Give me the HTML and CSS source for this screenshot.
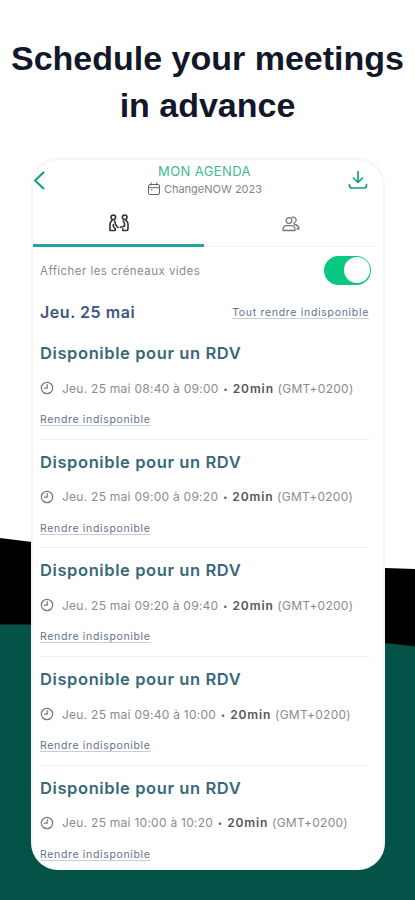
FILE: index.html
```
<!DOCTYPE html>
<html lang="fr">
<head>
<meta charset="utf-8">
<title>Mon agenda</title>
<link rel="stylesheet" href="styles.css">
</head>
<body>
<svg class="backdrop" viewBox="0 0 415 900" aria-hidden="true">
  <path d="M0 538L32 542L385 568L415 569V660H0Z" fill="#000"/>
  <path d="M0 624.500H32C180 624 280 629 385 643L415 646.500V900H0Z" fill="#045248"/>
</svg>
<svg class="defs" aria-hidden="true">
  <symbol id="clock" viewBox="0 0 14 14"><circle cx="7" cy="7" r="5.700"/><path d="M7.200 3.600V7.200H4.300"/></symbol>
</svg>
<main class="page">
  <h1 class="headline">Schedule your meetings<br>in advance</h1>
  <section class="card">
    <header class="bar">
      <svg class="back" viewBox="0 0 14 20"><path d="M10.500 2.500L2 10.500L10.500 18.500"/></svg>
      <div class="heading">
        <div class="name"><span>MON AGENDA</span></div>
        <div class="event">
          <svg class="calendar" viewBox="0 0 14 14"><rect x="1.500" y="2.500" width="11" height="10" rx="1.500"/><path d="M1.500 5.700H12.500M4.200 .8V3M9.800 .8V3M4.200 8H5"/></svg>
          <span>ChangeNOW 2023</span>
        </div>
      </div>
      <svg class="download" viewBox="0 0 20 20"><path d="M10 1.500V12M5.500 8L10 12.500L14.500 8M1.500 14.500V15.500Q1.500 18 4 18H16Q18.500 18 18.500 15.500V14.500"/></svg>
    </header>
    <nav class="tabs">
      <div class="tab active">
        <svg class="meet" viewBox="0 0 20 18"><circle cx="4.300" cy="3.300" r="2.300"/><circle cx="15.700" cy="3.300" r="2.300"/><path d="M3 6.500Q1 8 1 10V16.500H6.300V14.500L4.300 12.500V10.500M5.800 7L6.500 10.500L9 13.500M17 6.500Q19 8 19 10V15Q19 16.500 17.500 16.500H13.800V14.800M14.200 7L15.500 9.500V12L13.500 12.800L11.300 13.300"/></svg>
      </div>
      <div class="tab">
        <svg class="people" viewBox="0 0 18 16"><circle cx="7" cy="4.500" r="2.900"/><path d="M1 14.500V13Q1.300 9.700 4.500 9.700H9.500Q12.700 9.700 13 13V14.500ZM10 1.200C14.500 .2 15.500 5.500 12 7.200L12.500 8.500Q16.800 9 17 13H15"/></svg>
      </div>
    </nav>
    <div class="toggle-row">
      <span class="toggle-label">Afficher les créneaux vides</span>
      <span class="switch"><i></i></span>
    </div>
    <div class="day">
      <h2>Jeu. 25 mai</h2>
      <a>Tout rendre indisponible</a>
    </div>
    <div class="slots">
      <article class="slot">
        <h3>Disponible pour un RDV</h3>
        <div class="time"><svg><use href="#clock"/></svg><span>Jeu. 25 mai 08:40 à 09:00 <em>•</em> <b>20min</b> (GMT+0200)</span></div>
        <a>Rendre indisponible</a>
      </article>
      <article class="slot">
        <h3>Disponible pour un RDV</h3>
        <div class="time"><svg><use href="#clock"/></svg><span>Jeu. 25 mai 09:00 à 09:20 <em>•</em> <b>20min</b> (GMT+0200)</span></div>
        <a>Rendre indisponible</a>
      </article>
      <article class="slot">
        <h3>Disponible pour un RDV</h3>
        <div class="time"><svg><use href="#clock"/></svg><span>Jeu. 25 mai 09:20 à 09:40 <em>•</em> <b>20min</b> (GMT+0200)</span></div>
        <a>Rendre indisponible</a>
      </article>
      <article class="slot">
        <h3>Disponible pour un RDV</h3>
        <div class="time"><svg><use href="#clock"/></svg><span>Jeu. 25 mai 09:40 à 10:00 <em>•</em> <b>20min</b> (GMT+0200)</span></div>
        <a>Rendre indisponible</a>
      </article>
      <article class="slot">
        <h3>Disponible pour un RDV</h3>
        <div class="time"><svg><use href="#clock"/></svg><span>Jeu. 25 mai 10:00 à 10:20 <em>•</em> <b>20min</b> (GMT+0200)</span></div>
        <a>Rendre indisponible</a>
      </article>
    </div>
  </section>
</main>
</body>
</html>
```
FILE: styles.css
```
* { box-sizing: border-box; }
body { margin: 0; background: #fff; font-family: Inter, "Open Sans", sans-serif; }
h1, h2, h3 { margin: 0; }
svg { display: block; fill: none; stroke-linecap: round; stroke-linejoin: round; }
.defs { display: none; }
.backdrop { position: absolute; inset: 0; width: 415px; height: 900px; }
.page { position: relative; width: 415px; height: 900px; overflow: hidden; padding-top: 35px; }
.headline {
  height: 123px;
  font: bold 34px/47px "Liberation Sans", Arial, sans-serif;
  text-align: center;
  white-space: nowrap;
  color: #12172a;
}
.card {
  width: 354px;
  height: 712px;
  margin-left: 31px;
  background: #fff;
  border: 2px solid #f6f6f6;
  border-bottom-color: #fff;
  border-radius: 27px;
  overflow: hidden;
}
.bar { display: flex; height: 41px; justify-content: space-between; padding: 0 15px 0 0; }
.back { width: 14px; height: 20px; margin-top: 10px; stroke: #129a82; stroke-width: 2; }
.heading { padding: 3px 0 0 14px; }
.name { font-size: 13px; line-height: 16px; text-align: center; color: #3fba91; letter-spacing: .4px; }
.event { display: flex; align-items: center; gap: 3px; height: 19px; font-size: 11px; color: #858585; letter-spacing: 0; }
.calendar { width: 14px; height: 14px; stroke: #666; stroke-width: 1; }
.download { width: 20px; height: 20px; margin-top: 10px; stroke: #12a287; stroke-width: 1.7; }
.tabs { display: flex; gap: 2px; width: 343px; height: 46px; }
.tab { flex: 1; height: 46px; display: flex; justify-content: center; padding-top: 13px; border-bottom: 1px solid #f0f0f2; }
.tab.active { flex: none; width: 171px; border-bottom: 3px solid #22a699; }
.meet { width: 20px; height: 18px; stroke: #333; stroke-width: 1.6; }
.people { width: 18px; height: 16px; margin-top: 2px; stroke: #777; stroke-width: 1.3; }
.toggle-row { display: flex; justify-content: space-between; align-items: center; height: 48px; padding: 0 12px 0 7px; }
.toggle-label { font-size: 11.500px; color: #8b8b8f; letter-spacing: .45px; }
.switch { width: 47px; height: 29px; margin-top: -2px; border-radius: 15px; background: #09c982; display: flex; justify-content: flex-end; align-items: center; padding-right: 1px; }
.switch i { width: 26px; height: 26px; border-radius: 50%; background: #fff; }
.day { display: flex; justify-content: space-between; align-items: center; height: 34px; margin-bottom: 2px; padding: 1px 14px 1px 7px; }
.day h2 { font-size: 16px; font-weight: 600; color: #3e5681; letter-spacing: .55px; }
a { color: #65718d; text-decoration: underline; text-decoration-color: #c7ced8; text-underline-offset: 2px; }
.day a { font-size: 10.500px; letter-spacing: .7px; }
.slots { padding: 0 14px 0 7px; }
.slot { height: 108.700px; padding-top: 11px; border-bottom: 1px solid #eeeff1; }
.slot:last-child { border: 0; }
.slot h3 { font-size: 16.500px; line-height: 22px; font-weight: 600; color: #38697a; letter-spacing: .6px; white-space: nowrap; }
.time { display: flex; align-items: center; height: 20px; margin-top: 14px; font-size: 12px; color: #8b8b8f; white-space: nowrap; letter-spacing: .26px; }
.time svg { width: 14px; height: 14px; margin-right: 8px; stroke: #777; stroke-width: 1.2; }
.time em { display: inline-block; font-size: 8px; font-style: normal; color: #666; padding: 0 1px; vertical-align: 1px; }
.time b { font-weight: 600; color: #55555b; letter-spacing: .9px; }
.slot a { display: block; margin-top: 14px; font-size: 10.500px; line-height: 16px; letter-spacing: .66px; }
```
